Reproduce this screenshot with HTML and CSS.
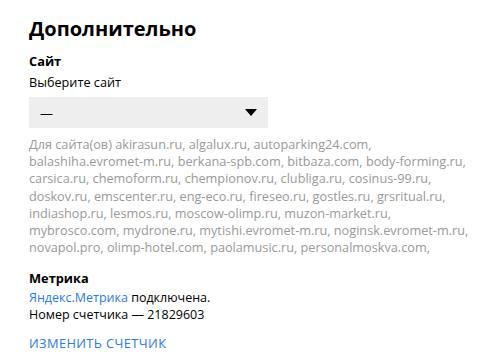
FILE: index.html
```html
<!DOCTYPE html>
<html lang="ru">
  <head>
    <meta charset="utf-8">
    <title>Дополнительно</title>
    <link rel="stylesheet" href="styles.css">
  </head>
  <body>
    <div class="panel">
      <h1 class="title">Дополнительно</h1>

      <div class="section">
        <div class="label">Сайт</div>
        <div class="hint">Выберите сайт</div>
        <div class="select">
          <span class="select-value">—</span>
          <svg class="select-arrow" width="12" height="7" viewBox="0 0 12 7"><path d="M0 0h12L6 7z" fill="#000"/></svg>
        </div>
        <p class="sites">Для сайта(ов) akirasun.ru, algalux.ru, autoparking24.com, balashiha.evromet-m.ru, berkana-spb.com, bitbaza.com, body-forming.ru, carsica.ru, chemoform.ru, chempionov.ru, clubliga.ru, cosinus-99.ru, doskov.ru, emscenter.ru, eng-eco.ru, fireseo.ru, gostles.ru, grsritual.ru, indiashop.ru, lesmos.ru, moscow-olimp.ru, muzon-market.ru, mybrosco.com, mydrone.ru, mytishi.evromet-m.ru, noginsk.evromet-m.ru, novapol.pro, olimp-hotel.com, paolamusic.ru, personalmoskva.com,</p>
      </div>

      <div class="section metrika">
        <div class="label">Метрика</div>
        <div class="text"><a class="link" href="#">Яндекс.Метрика</a> подключена.</div>
        <div class="text">Номер счетчика — 21829603</div>
        <a class="action" href="#">Изменить счетчик</a>
      </div>
    </div>
  </body>
</html>
```

FILE: styles.css
```css
body {
  margin: 0;
  background: #fff;
  font-family: "Open Sans", "Noto Sans", sans-serif;
  color: #000;
}
.panel {
  padding: 14px 22px 0 29px;
}
.title {
  margin: 0;
  font-size: 20px;
  line-height: 30px;
  font-weight: 700;
}
.section {
  margin-top: 8px;
}
.label {
  font-size: 12.8px;
  font-weight: 700;
  line-height: 18px;
}
.hint {
  font-size: 12.7px;
  line-height: 18px;
  margin-top: 3px;
}
.select {
  display: flex;
  align-items: center;
  justify-content: space-between;
  width: 239px;
  height: 31px;
  margin-top: 6px;
  padding: 0 11px;
  box-sizing: border-box;
  background: #eeeeee;
}
.select-value {
  font-size: 13px;
}
.sites {
  margin: 8px 0 0;
  font-size: 12.7px;
  line-height: 17.2px;
  color: #999999;
}
.metrika {
  margin-top: 13px;
}
.metrika .label {
  margin-bottom: 2px;
}
.text {
  font-size: 12.5px;
  line-height: 17px;
}
.link {
  color: #2a7be3;
  text-decoration: none;
}
.action {
  display: inline-block;
  margin-top: 12px;
  color: #2a7be3;
  text-decoration: none;
  text-transform: uppercase;
  font-size: 12.8px;
  line-height: 17px;
  letter-spacing: 0.4px;
}
```
